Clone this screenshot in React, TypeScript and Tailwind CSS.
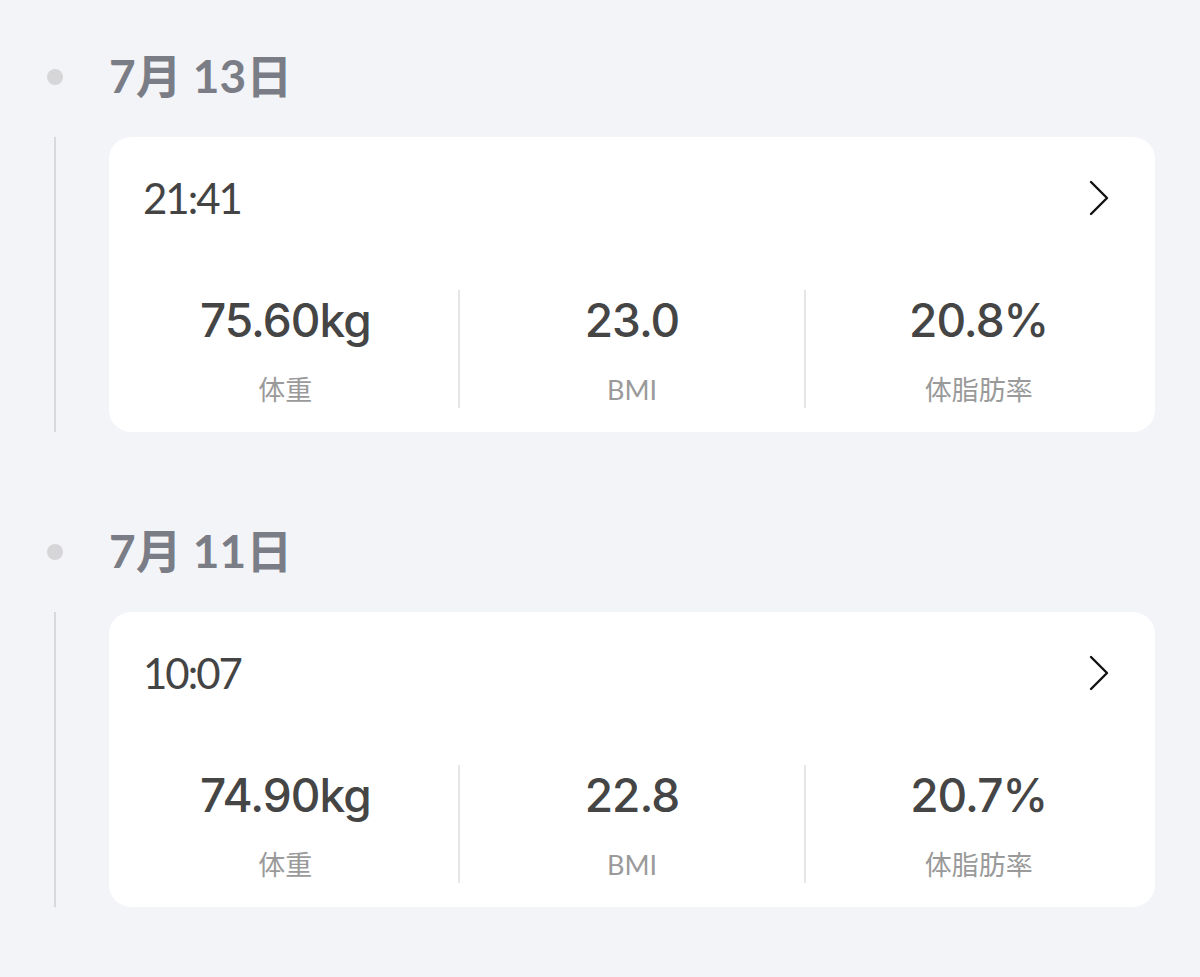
const records = [
  {
    date: "7月 13日",
    time: "21:41",
    weight: "75.60kg",
    bmi: "23.0",
    fat: "20.8%",
  },
  {
    date: "7月 11日",
    time: "10:07",
    weight: "74.90kg",
    bmi: "22.8",
    fat: "20.7%",
  },
];

const FONT = { fontFamily: 'Lato, "Noto Sans CJK JP", sans-serif' };

function Chevron() {
  return (
    <svg width="22" height="36" viewBox="0 0 22 36" fill="none">
      <path d="M3 2 L19 18 L3 34" stroke="#111" strokeWidth="2.4" strokeLinecap="round" strokeLinejoin="round" />
    </svg>
  );
}

function Stat({ value, label }: { value: string; label: string }) {
  return (
    <div className="flex flex-1 flex-col items-center">
      <div className="font-['Inter',sans-serif] text-[46px] leading-[60px] font-medium tracking-[-1px] text-[#454545]">
        {value}
      </div>
      <div className="mt-[23px] text-[27px] leading-[34px] text-[#9a9a9a]">{label}</div>
    </div>
  );
}

export default function App() {
  return (
    <div className="min-h-[977px] w-[1200px] bg-[#f3f4f8] pt-[47px]" style={FONT}>
      {records.map((r) => (
        <section key={r.date} className="mb-[90px]">
          <div className="flex h-[56px] items-center">
            <div className="flex w-[109px] justify-center">
              <div className="mt-[4px] h-[16px] w-[16px] rounded-full bg-[#d6d6d8]" />
            </div>
            <div className="text-[46px] font-bold text-[#7b7d86]">{r.date}</div>
          </div>
          <div className="mt-[34px] flex">
            <div className="flex w-[109px] justify-center">
              <div className="w-[2px] bg-[#d9d9db]" />
            </div>
            <div className="h-[295px] w-[1046px] rounded-[22px] bg-white px-[4px]">
              <div className="flex items-center justify-between pt-[37px] pl-[30px] pr-[41px]">
                <div className="text-[42px] leading-[48px] tracking-[-2px] text-[#444]">{r.time}</div>
                <Chevron />
              </div>
              <div className="mt-[68px] flex items-start">
                <Stat value={r.weight} label="体重" />
                <div className="h-[118px] w-[2px] bg-[#e6e6e8]" />
                <Stat value={r.bmi} label="BMI" />
                <div className="h-[118px] w-[2px] bg-[#e6e6e8]" />
                <Stat value={r.fat} label="体脂肪率" />
              </div>
            </div>
          </div>
        </section>
      ))}
    </div>
  );
}
